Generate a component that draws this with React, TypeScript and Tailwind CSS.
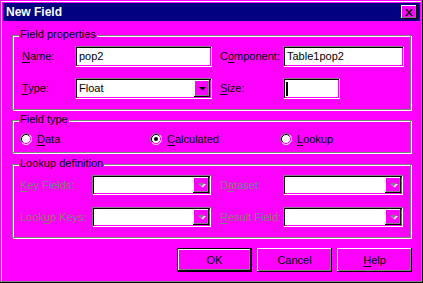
import React from 'react';

const FACE = 'bg-[#ff00ff]';
const raised = 'shadow-[inset_-1px_-1px_#000,inset_1px_1px_#fff,inset_-2px_-2px_#808080]';
const sunken = 'shadow-[inset_1px_1px_#808080,inset_-1px_-1px_#fff,inset_2px_2px_#000,inset_-2px_-2px_#ff00ff]';

function Mn({ text, at }: { text: string; at: number }) {
  return (
    <>
      {text.slice(0, at)}
      <span className="underline decoration-1 underline-offset-[2px]">{text[at]}</span>
      {text.slice(at + 1)}
    </>
  );
}

function Arrow({ disabled }: { disabled?: boolean }) {
  return (
    <svg width="9" height="6" viewBox="0 0 9 6">
      {disabled && <path d="M2 2h7L5.5 5.5z" fill="#fff" />}
      <path d="M1 1h7L4.5 4.5z" fill={disabled ? '#808080' : '#000'} />
    </svg>
  );
}

function Field({ width, height = 21, value, cursor }: { width: number; height?: number; value?: string; cursor?: boolean }) {
  return (
    <div
      className={`bg-white ${sunken} flex items-center pl-[4px] text-black`}
      style={{ width, height }}
    >
      {cursor && <div className="w-[2px] h-[14px] bg-black ml-[-1px]" />}
      {value}
    </div>
  );
}

function Combo({ width, height = 21, value, disabled }: { width: number; height?: number; value?: string; disabled?: boolean }) {
  return (
    <div
      className={`bg-white ${sunken} flex items-center justify-between p-[2px] text-black`}
      style={{ width, height }}
    >
      <span className="pl-[2px]">{value}</span>
      <div className={`w-[16px] h-full ${FACE} ${raised} flex items-center justify-center`}>
        <Arrow disabled={disabled} />
      </div>
    </div>
  );
}

function Radio({ checked }: { checked?: boolean }) {
  return (
    <svg width="12" height="12" viewBox="0 0 12 12" className="shrink-0">
      <circle cx="6" cy="6" r="5" fill="#fff" />
      <path d="M2.11 9.89A5.5 5.5 0 0 1 9.89 2.11" fill="none" stroke="#808080" />
      <path d="M9.89 2.11A5.5 5.5 0 0 1 2.11 9.89" fill="none" stroke="#fff" />
      <path d="M2.82 9.18A4.5 4.5 0 0 1 9.18 2.82" fill="none" stroke="#000" />
      <path d="M9.18 2.82A4.5 4.5 0 0 1 2.82 9.18" fill="none" stroke="#ff00ff" />
      {checked && <circle cx="6" cy="6" r="2" fill="#000" />}
    </svg>
  );
}

function Group({ title, className, children }: { title: string; className: string; children: React.ReactNode }) {
  return (
    <div
      className={`relative ml-[12px] w-[399px] border border-[#808080] shadow-[inset_1px_1px_#fff,1px_1px_#fff] ${className}`}
    >
      <span className={`absolute left-[6px] -top-[8px] px-[1px] leading-[13px] ${FACE} text-black`}>{title}</span>
      {children}
    </div>
  );
}

function Button({ label, def }: { label: React.ReactNode; def?: boolean }) {
  return (
    <div className={`w-[75px] h-[24px] ${def ? 'border border-black' : ''}`}>
      <div className={`w-full h-full ${FACE} ${raised} flex items-center justify-center text-black`}>{label}</div>
    </div>
  );
}

export default function App() {
  return (
    <div
      className={`w-[423px] h-[283px] ${FACE} shadow-[inset_-1px_-1px_#000,inset_-2px_-2px_#808080,inset_1px_1px_#ff00ff,inset_2px_2px_#fff] font-['Liberation_Sans',Arial,sans-serif] text-[11px] leading-[13px] flex flex-col`}
    >
      {/* Title bar */}
      <div className="mx-[3px] mt-[3px] h-[18px] bg-[#000080] flex items-center justify-between">
        <span className="pl-[3px] text-white font-bold text-[12px]">New Field</span>
        <div className={`w-[16px] h-[14px] mr-[3px] ${FACE} ${raised} flex items-center justify-center`}>
          <svg width="8" height="7" viewBox="0 0 8 7">
            <path d="M0 0h2l2 2.5L6 0h2L5 3.5 8 7H6L4 4.5 2 7H0l3-3.5z" fill="#000" />
          </svg>
        </div>
      </div>

      {/* Field properties */}
      <Group title="Field properties" className="mt-[14px] h-[75px] pt-[10px] pl-[9px]">
        <div className="flex items-center h-[21px]">
          <span className="w-[53px]"><Mn text="Name:" at={0} /></span>
          <Field width={137} value="pop2" />
          <span className="w-[63px] ml-[8px]"><Mn text="Component:" at={1} /></span>
          <Field width={121} value="Table1pop2" />
        </div>
        <div className="flex items-center h-[21px] mt-[11px]">
          <span className="w-[53px]"><Mn text="Type:" at={0} /></span>
          <Combo width={137} value="Float" />
          <span className="w-[63px] ml-[8px]"><Mn text="Size:" at={0} /></span>
          <Field width={57} cursor />
        </div>
      </Group>

      {/* Field type */}
      <Group title="Field type" className="mt-[10px] h-[33px] pt-[12px] pl-[7px]">
        <div className="flex items-center h-[12px]">
          <div className="w-[130px] flex items-center gap-[5px]">
            <Radio />
            <span><Mn text="Data" at={0} /></span>
          </div>
          <div className="w-[130px] flex items-center gap-[5px]">
            <Radio checked />
            <span><Mn text="Calculated" at={0} /></span>
          </div>
          <div className="flex items-center gap-[5px]">
            <Radio />
            <span><Mn text="Lookup" at={0} /></span>
          </div>
        </div>
      </Group>

      {/* Lookup definition */}
      <Group title="Lookup definition" className="mt-[11px] h-[74px] pt-[10px] pl-[7px]">
        <div className="flex items-center h-[20px] text-[#808080]">
          <span className="w-[72px]"><Mn text="Key Fields:" at={0} /></span>
          <Combo width={119} height={20} disabled />
          <span className="w-[63px] ml-[9px]"><Mn text="Dataset:" at={1} /></span>
          <Combo width={120} height={20} disabled />
        </div>
        <div className="flex items-center h-[20px] mt-[12px] text-[#808080]">
          <span className="w-[72px]"><Mn text="Lookup Keys:" at={4} /></span>
          <Combo width={119} height={20} disabled />
          <span className="w-[63px] ml-[9px]"><Mn text="Result Field:" at={0} /></span>
          <Combo width={120} height={20} disabled />
        </div>
      </Group>

      {/* Buttons */}
      <div className="mt-[10px] pr-[11px] flex justify-end gap-[5px]">
        <Button label="OK" def />
        <Button label="Cancel" />
        <Button label={<Mn text="Help" at={0} />} />
      </div>
    </div>
  );
}
